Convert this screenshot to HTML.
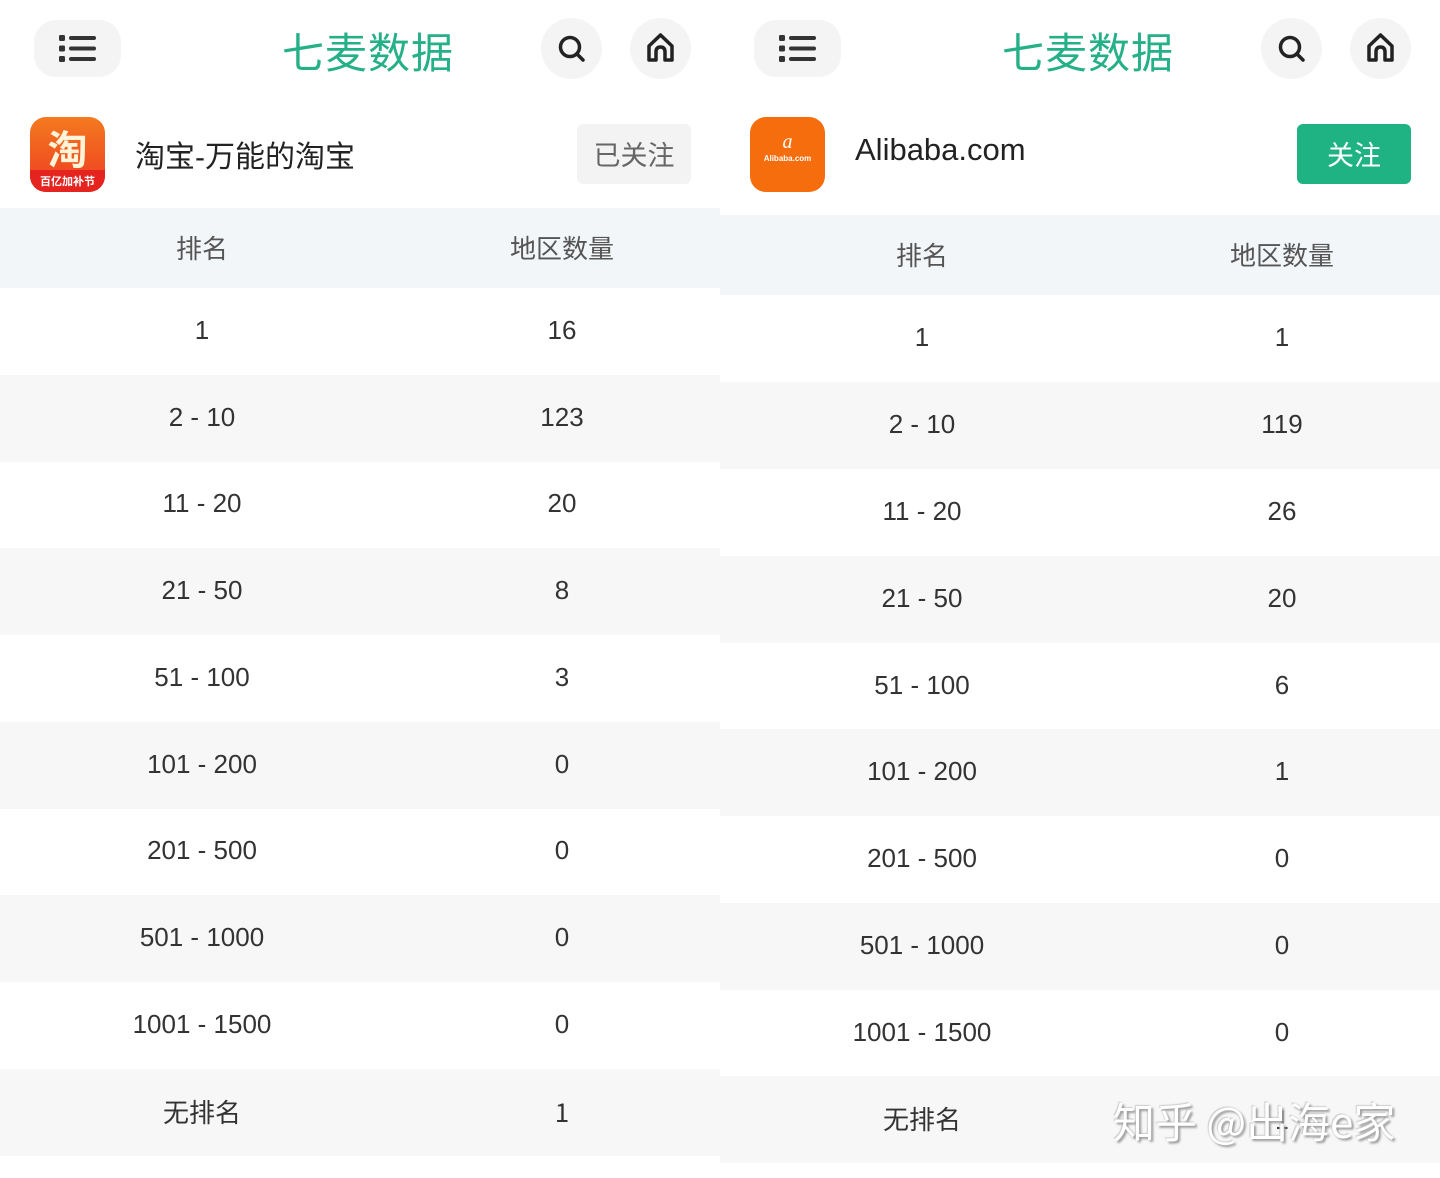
<!DOCTYPE html>
<html><head><meta charset="utf-8">
<style>
*{margin:0;padding:0;box-sizing:border-box}
body{width:1440px;height:1178px;background:#fff;position:relative;overflow:hidden;font-family:"Liberation Sans","Noto Sans CJK SC",sans-serif;color:#333}
.p{position:absolute;top:0;width:720px;height:1178px}
.menu{position:absolute;left:34px;top:20px;width:87px;height:57px;border-radius:22px;background:#f4f4f4}
.circ{position:absolute;top:18px;width:61px;height:61px;border-radius:50%;background:#f4f4f4}
.title{position:absolute;left:268px;top:20px;width:200px;text-align:center;font-size:42px;color:#25b087;font-family:"Noto Sans CJK SC",sans-serif;font-weight:400;letter-spacing:1px}
.icon{position:absolute;left:30px;top:117px;width:75px;height:75px;border-radius:16px;overflow:hidden}
.name{position:absolute;left:135px;top:132px;font-size:30px;color:#222;font-family:"Liberation Sans","Noto Sans CJK SC",sans-serif}
.btn{position:absolute;left:577px;top:124px;width:114px;height:60px;border-radius:6px;font-size:27px;text-align:center;line-height:60px;font-family:"Noto Sans CJK SC",sans-serif}
.row{position:absolute;left:0;width:720px;height:87px;display:flex;align-items:center;font-size:26px;color:#333;font-family:"Liberation Sans","Noto Sans CJK SC",sans-serif}
.row span{position:absolute;width:300px;text-align:center;margin-top:-2px}
.row span:first-child{left:52px}
.row span:last-child{left:412px}
.g{background:#f7f7f7}
.h{background:#f3f6f9;height:80px;color:#555;font-family:"Noto Sans CJK SC",sans-serif}
.cjk{font-family:"Noto Sans CJK SC",sans-serif}
</style></head><body>

<div class="p" style="left:0">
<div class="menu"><svg width="87" height="57" viewBox="0 0 87 57"><g fill="#333"><rect x="25" y="15" width="6" height="6" rx="1.5"/><rect x="25" y="25.5" width="6" height="6" rx="1.5"/><rect x="25" y="36" width="6" height="6" rx="1.5"/><rect x="35" y="16" width="27" height="4" rx="2"/><rect x="35" y="26.5" width="27" height="4" rx="2"/><rect x="35" y="37" width="27" height="4" rx="2"/></g></svg></div>
<div class="title">七麦数据</div>
<div class="circ" style="left:541px"><svg width="61" height="61"><circle cx="29" cy="29" r="9.5" fill="none" stroke="#222" stroke-width="3.5"/><line x1="36" y1="36" x2="42" y2="42" stroke="#222" stroke-width="3.5" stroke-linecap="round"/></svg></div>
<div class="circ" style="left:630px"><svg width="61" height="61"><path d="M19 42 V28 L30.5 17 L42 28 V42 H35 V34 Q35 29 30.5 29 Q26 29 26 34 V42 Z" fill="none" stroke="#222" stroke-width="3.5" stroke-linejoin="round"/></svg></div>
<div class="icon" style="background:linear-gradient(#f47a1f,#ee3b22)"><div style="position:absolute;left:0;right:0;top:8px;text-align:center;font-size:40px;color:#fff4d8;font-weight:bold;font-family:'Noto Sans CJK SC',sans-serif;line-height:44px">淘</div><div style="position:absolute;left:0;right:0;bottom:0;height:22px;background:#e5231f;color:#fff;font-size:11px;text-align:center;line-height:22px;font-family:'Noto Sans CJK SC',sans-serif;font-weight:bold">百亿加补节</div></div>
<div class="name">淘宝-万能的淘宝</div>
<div class="btn" style="background:#f3f3f3;color:#666">已关注</div>
<div class="row h" style="top:208px"><span>排名</span><span>地区数量</span></div>
<div class="row" style="top:288px"><span>1</span><span>16</span></div>
<div class="row g" style="top:375px"><span>2 - 10</span><span>123</span></div>
<div class="row" style="top:461px"><span>11 - 20</span><span>20</span></div>
<div class="row g" style="top:548px"><span>21 - 50</span><span>8</span></div>
<div class="row" style="top:635px"><span>51 - 100</span><span>3</span></div>
<div class="row g" style="top:722px"><span>101 - 200</span><span>0</span></div>
<div class="row" style="top:808px"><span>201 - 500</span><span>0</span></div>
<div class="row g" style="top:895px"><span>501 - 1000</span><span>0</span></div>
<div class="row" style="top:982px"><span>1001 - 1500</span><span>0</span></div>
<div class="row g cjk" style="top:1069px"><span>无排名</span><span>1</span></div>
</div>

<div class="p" style="left:720px">
<div class="menu"><svg width="87" height="57" viewBox="0 0 87 57"><g fill="#333"><rect x="25" y="15" width="6" height="6" rx="1.5"/><rect x="25" y="25.5" width="6" height="6" rx="1.5"/><rect x="25" y="36" width="6" height="6" rx="1.5"/><rect x="35" y="16" width="27" height="4" rx="2"/><rect x="35" y="26.5" width="27" height="4" rx="2"/><rect x="35" y="37" width="27" height="4" rx="2"/></g></svg></div>
<div class="title">七麦数据</div>
<div class="circ" style="left:541px"><svg width="61" height="61"><circle cx="29" cy="29" r="9.5" fill="none" stroke="#222" stroke-width="3.5"/><line x1="36" y1="36" x2="42" y2="42" stroke="#222" stroke-width="3.5" stroke-linecap="round"/></svg></div>
<div class="circ" style="left:630px"><svg width="61" height="61"><path d="M19 42 V28 L30.5 17 L42 28 V42 H35 V34 Q35 29 30.5 29 Q26 29 26 34 V42 Z" fill="none" stroke="#222" stroke-width="3.5" stroke-linejoin="round"/></svg></div>
<div class="icon" style="background:#f56d0c"><div style="position:absolute;left:0;right:0;top:14px;text-align:center;font-size:20px;color:#fff;font-style:italic;font-family:'Liberation Serif',serif">a</div><div style="position:absolute;left:0;right:0;top:37px;text-align:center;font-size:8px;color:#fff;font-weight:bold">Alibaba.com</div></div>
<div class="name" style="font-size:31px">Alibaba.com</div>
<div class="btn" style="background:#1fb384;color:#fff">关注</div>
<div class="row h" style="top:215px"><span>排名</span><span>地区数量</span></div>
<div class="row" style="top:295px"><span>1</span><span>1</span></div>
<div class="row g" style="top:382px"><span>2 - 10</span><span>119</span></div>
<div class="row" style="top:469px"><span>11 - 20</span><span>26</span></div>
<div class="row g" style="top:556px"><span>21 - 50</span><span>20</span></div>
<div class="row" style="top:643px"><span>51 - 100</span><span>6</span></div>
<div class="row g" style="top:729px"><span>101 - 200</span><span>1</span></div>
<div class="row" style="top:816px"><span>201 - 500</span><span>0</span></div>
<div class="row g" style="top:903px"><span>501 - 1000</span><span>0</span></div>
<div class="row" style="top:990px"><span>1001 - 1500</span><span>0</span></div>
<div class="row g cjk" style="top:1076px"><span>无排名</span><span>1</span></div>
<div style="position:absolute;left:393px;top:1090px;font-size:42px;color:#fff;text-shadow:2px 2px 2px #999,-1px -1px 1px #ccc;font-family:'Noto Sans CJK SC',sans-serif;white-space:nowrap">知乎 @出海e家</div>
</div>
</body></html>
